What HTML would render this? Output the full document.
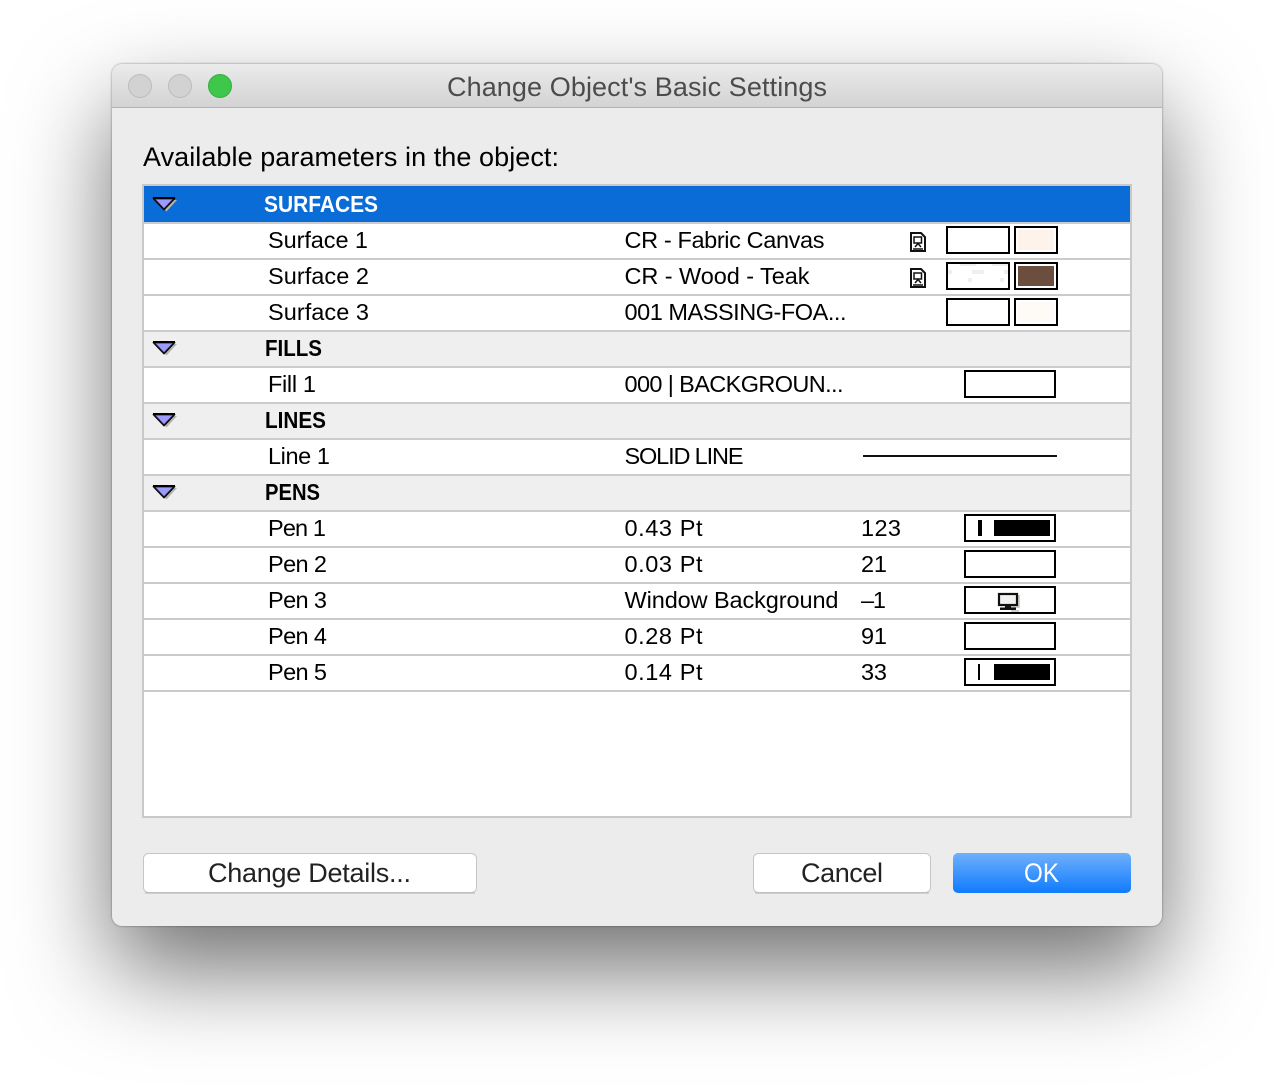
<!DOCTYPE html>
<html>
<head>
<meta charset="utf-8">
<style>
html,body{margin:0;padding:0;background:#fff;width:1274px;height:1086px;overflow:hidden}
#win{position:absolute;left:112px;top:64px;width:1050px;height:862px;border-radius:10px;background:#ececec;box-shadow:0 44px 96px 0 rgba(0,0,0,.56),0 0 2px rgba(0,0,0,.45)}
#bar{position:absolute;left:0;top:0;width:1050px;height:43px;border-radius:10px 10px 0 0;background:linear-gradient(#ebebeb,#d3d3d3);border-bottom:1px solid #b4b4b4}
svg{position:absolute;left:0;top:0}
text{font-family:"Liberation Sans",sans-serif;font-size:23.5px;fill:#000}
.b{font-weight:bold;font-size:23px}
.l{font-size:27px}
</style>
</head>
<body>
<div id="win"><div id="bar"></div></div>
<svg width="1274" height="1086" viewBox="0 0 1274 1086">
<defs>
<linearGradient id="ok" x1="0" y1="0" x2="0" y2="1"><stop offset="0" stop-color="#6fb0fb"/><stop offset="1" stop-color="#0f7bfd"/></linearGradient>
<g id="tri">
<path d="M156 2 L177 2 L166.500 13.500 Z" fill="#b4b4b4"/>
<path d="M153.500 0.500 L174.500 0.500 L164 11.500 Z" fill="#9a9aff" stroke="#111" stroke-width="1.800" stroke-linejoin="round"/>
<path d="M153 0 H175" stroke="#000" stroke-width="2"/>
</g>
<g id="doc" fill="none" stroke="#111">
<path d="M911 233 H921 L925 237 V251 H911 Z" stroke-width="2" fill="#fff"/>
<path d="M914 237 H921.500 V243 H914 Z" stroke-width="1.500"/>
<path d="M915 247 L918 243.500 L921 247" stroke-width="1.500"/>
<path d="M913 249 H923" stroke-width="1.500"/>
</g>
</defs>

<!-- traffic lights -->
<circle cx="140" cy="86" r="11.500" fill="#d2d2d2" stroke="#bcbcbc" stroke-width="1"/>
<circle cx="180" cy="86" r="11.500" fill="#d2d2d2" stroke="#bcbcbc" stroke-width="1"/>
<circle cx="220" cy="86" r="11.500" fill="#3fc74b" stroke="#35ae40" stroke-width="1"/>
<text class="l" x="447" y="96" textLength="380" lengthAdjust="spacing" style="fill:#4c4c4c">Change Object's Basic Settings</text>
<text class="l" x="143" y="166" textLength="416" lengthAdjust="spacing">Available parameters in the object:</text>

<!-- list -->
<rect x="143" y="185" width="988" height="632" fill="#fff" stroke="#c9c9c9" stroke-width="2"/>
<rect x="144" y="186" width="986" height="36" fill="#0a6cd6"/>
<rect x="144" y="332" width="986" height="34" fill="#efefef"/>
<rect x="144" y="404" width="986" height="34" fill="#efefef"/>
<rect x="144" y="476" width="986" height="34" fill="#efefef"/>
<g fill="#cbcbcb">
<rect x="144" y="222" width="986" height="2"/><rect x="144" y="258" width="986" height="2"/>
<rect x="144" y="294" width="986" height="2"/><rect x="144" y="330" width="986" height="2"/>
<rect x="144" y="366" width="986" height="2"/><rect x="144" y="402" width="986" height="2"/>
<rect x="144" y="438" width="986" height="2"/><rect x="144" y="474" width="986" height="2"/>
<rect x="144" y="510" width="986" height="2"/><rect x="144" y="546" width="986" height="2"/>
<rect x="144" y="582" width="986" height="2"/><rect x="144" y="618" width="986" height="2"/>
<rect x="144" y="654" width="986" height="2"/><rect x="144" y="690" width="986" height="2"/>
</g>

<use href="#tri" y="198"/><use href="#tri" y="342"/><use href="#tri" y="414"/><use href="#tri" y="486"/>

<text class="b" x="264" y="212" textLength="114" lengthAdjust="spacingAndGlyphs" style="fill:#fff">SURFACES</text>
<text class="b" x="265" y="356" textLength="57" lengthAdjust="spacingAndGlyphs">FILLS</text>
<text class="b" x="265" y="428" textLength="61" lengthAdjust="spacingAndGlyphs">LINES</text>
<text class="b" x="265" y="500" textLength="55" lengthAdjust="spacingAndGlyphs">PENS</text>

<text x="268" y="248" textLength="100" lengthAdjust="spacing">Surface 1</text>
<text x="268" y="284" textLength="101" lengthAdjust="spacing">Surface 2</text>
<text x="268" y="320" textLength="101" lengthAdjust="spacing">Surface 3</text>
<text x="268" y="392" textLength="48" lengthAdjust="spacing">Fill 1</text>
<text x="268" y="464" textLength="62" lengthAdjust="spacing">Line 1</text>
<text x="268" y="536" textLength="58" lengthAdjust="spacing">Pen 1</text>
<text x="268" y="572" textLength="59" lengthAdjust="spacing">Pen 2</text>
<text x="268" y="608" textLength="59" lengthAdjust="spacing">Pen 3</text>
<text x="268" y="644" textLength="59" lengthAdjust="spacing">Pen 4</text>
<text x="268" y="680" textLength="59" lengthAdjust="spacing">Pen 5</text>

<text x="624.500" y="248" textLength="200" lengthAdjust="spacing">CR - Fabric Canvas</text>
<text x="624.500" y="284" textLength="185" lengthAdjust="spacing">CR - Wood - Teak</text>
<text x="624.500" y="320" textLength="222" lengthAdjust="spacing">001 MASSING-FOA...</text>
<text x="624.500" y="392" textLength="219" lengthAdjust="spacing">000 | BACKGROUN...</text>
<text x="624.500" y="464" textLength="119" lengthAdjust="spacing">SOLID LINE</text>
<text x="624.500" y="536" textLength="78" lengthAdjust="spacing">0.43 Pt</text>
<text x="624.500" y="572" textLength="78" lengthAdjust="spacing">0.03 Pt</text>
<text x="624.500" y="608" textLength="214" lengthAdjust="spacing">Window Background</text>
<text x="624.500" y="644" textLength="78" lengthAdjust="spacing">0.28 Pt</text>
<text x="624.500" y="680" textLength="78" lengthAdjust="spacing">0.14 Pt</text>

<text x="861" y="536" textLength="40" lengthAdjust="spacing">123</text>
<text x="861" y="572" textLength="26" lengthAdjust="spacing">21</text>
<text x="861" y="608" textLength="25" lengthAdjust="spacing">–1</text>
<text x="861" y="644" textLength="26" lengthAdjust="spacing">91</text>
<text x="861" y="680" textLength="26" lengthAdjust="spacing">33</text>

<use href="#doc"/><use href="#doc" y="36"/>

<!-- surface swatches -->
<g fill="#fff" stroke="#000" stroke-width="2">
<rect x="947" y="227" width="62" height="26"/><rect x="1015" y="227" width="42" height="26"/>
<rect x="947" y="263" width="62" height="26"/><rect x="1015" y="263" width="42" height="26"/>
<rect x="947" y="299" width="62" height="26"/><rect x="1015" y="299" width="42" height="26"/>
<rect x="965" y="371" width="90" height="26"/>
<rect x="965" y="515" width="90" height="26"/><rect x="965" y="551" width="90" height="26"/>
<rect x="965" y="587" width="90" height="26"/><rect x="965" y="623" width="90" height="26"/>
<rect x="965" y="659" width="90" height="26"/>
</g>
<rect x="1018" y="230" width="36" height="20" fill="#fdf3ea"/>
<rect x="1018" y="266" width="36" height="20" fill="#6b4e3e"/>
<rect x="1018" y="302" width="36" height="20" fill="#fefaf6"/>
<g fill="#efefef">
<rect x="960" y="264" width="16" height="2"/><rect x="992" y="264" width="16" height="2"/>
<rect x="972" y="270" width="12" height="4"/><rect x="948" y="270" width="4" height="4"/>
<rect x="1004" y="270" width="4" height="4"/><rect x="968" y="278" width="4" height="4"/>
<rect x="1000" y="278" width="4" height="4"/>
</g>

<!-- line -->
<rect x="863" y="455" width="194" height="2" fill="#111"/>

<!-- pen samples -->
<rect x="978" y="520" width="4" height="16" fill="#000"/>
<rect x="994" y="520" width="56" height="16" fill="#000"/>
<rect x="978" y="664" width="2" height="16" fill="#000"/>
<rect x="994" y="664" width="56" height="16" fill="#000"/>

<!-- monitor -->
<path d="M1001 596 H1019 V607 H1012 V611 H1019" fill="none" stroke="#c2bfb4" stroke-width="1.500"/>
<rect x="999" y="594" width="18" height="11" fill="#f2f2f2" stroke="#111" stroke-width="2.200"/>
<rect x="1005" y="605.500" width="6" height="2.500" fill="#111"/>
<rect x="1000" y="607.500" width="16" height="2.500" fill="#111"/>

<!-- buttons -->
<rect x="143.500" y="853.500" width="333" height="39" rx="5" fill="#fff" stroke="#c6c6c6" stroke-width="1"/>
<path d="M145 893 H475" stroke="#b5b5b5" stroke-width="1"/>
<rect x="753.500" y="853.500" width="177" height="39" rx="5" fill="#fff" stroke="#c6c6c6" stroke-width="1"/>
<path d="M755 893 H929" stroke="#b5b5b5" stroke-width="1"/>
<rect x="953" y="853" width="178" height="40" rx="5" fill="url(#ok)"/>
<text class="l" x="208" y="882" textLength="203" lengthAdjust="spacing" style="fill:#222">Change Details...</text>
<text class="l" x="801" y="882" textLength="82" lengthAdjust="spacing" style="fill:#222">Cancel</text>
<text class="l" x="1024" y="882" textLength="35" lengthAdjust="spacingAndGlyphs" style="fill:#fff">OK</text>
</svg>
</body>
</html>
